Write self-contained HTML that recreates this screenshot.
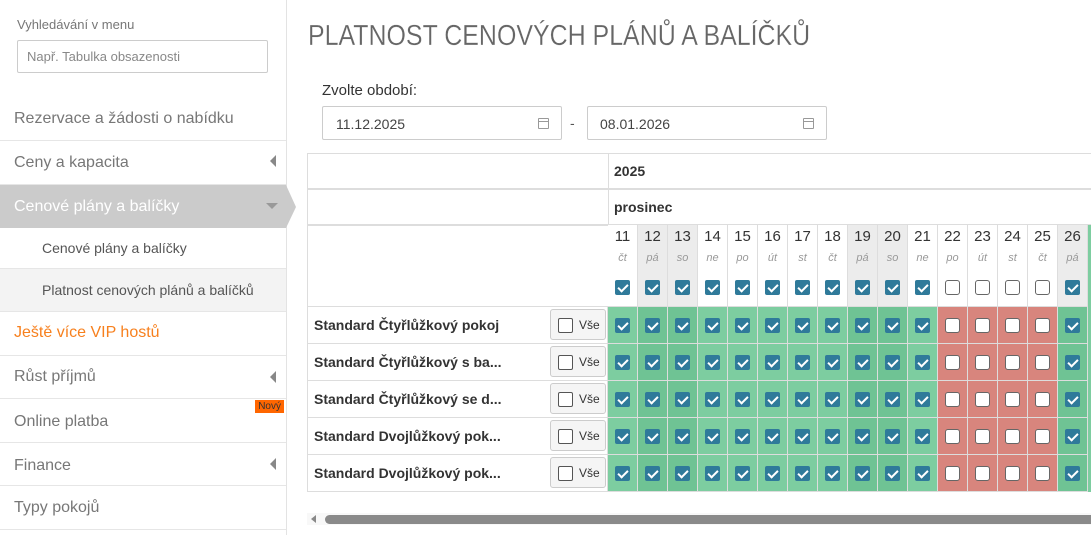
<!DOCTYPE html>
<html><head><meta charset="utf-8"><style>
*{box-sizing:border-box}
body{margin:0;width:1091px;height:535px;overflow:hidden;background:#fff;font-family:"Liberation Sans","DejaVu Sans",sans-serif;position:relative;color:#333}
.a{position:absolute}
.side{left:0;top:0;width:287px;height:535px;border-right:1px solid #e3e3e3}
.mi{position:absolute;left:0;width:286px;border-bottom:1px solid #e6e6e6;font-size:16px;color:#777;padding-left:14px}
.tri{position:absolute;right:10px;width:0;height:0;border-top:6px solid transparent;border-bottom:6px solid transparent;border-right:6px solid #888}
.inp{border:1px solid #ccc;border-radius:2px;font-size:14px;color:#444}
.cal{position:absolute;right:12px;top:11px;width:11px;height:11px;border:1px solid #999;border-radius:1px}
.cal:before{content:"";position:absolute;left:0;right:0;top:2px;border-top:1px solid #999}
.col{position:absolute;top:225px;width:30px}
.h{height:82px;border-right:1px solid #ddd;border-bottom:1px solid #ddd;text-align:center;position:relative;background:#fff}
.w .h{background:#ececec}
.h b{position:absolute;left:0;right:0;top:3px;font-weight:normal;font-size:15px;color:#333}
.h i{position:absolute;left:0;right:0;top:27px;font-size:11px;color:#999}
.h span{position:absolute;left:7px;top:55px}
.d{height:37px;border-right:1px solid #ddd;border-bottom:1px solid #ddd;position:relative;background:#7dcda0}
.w .d{background:#6fc394}
.r .d{background:#d8857d}
.d span{position:absolute;left:7px;top:11px}
.c,.u{display:block;width:15px;height:15px;border-radius:2px}
.c{background:#2f7a9a;position:relative}
.c:after{content:"";position:absolute;left:5px;top:2px;width:4px;height:8px;border:solid #fff;border-width:0 2px 2px 0;transform:rotate(45deg)}
.u{background:#fff;border:1px solid #666;border-radius:3px}
.rn{position:absolute;left:307px;width:301px;height:37px;border-left:1px solid #ddd;border-bottom:1px solid #ddd;border-right:1px solid #ddd;font-weight:bold;font-size:14px;color:#333;padding:10px 0 0 6px}
.vse{position:absolute;left:242px;top:2px;width:56px;height:31px;border:1px solid #ccc;border-radius:3px;background:#f5f5f5;font-weight:normal;font-size:12px;padding:8px 0 0 28px}
.vse:before{content:"";position:absolute;left:7px;top:8px;width:13px;height:13px;border:1px solid #555;border-radius:2px;background:#fff}
</style></head><body>
<div class="a side">
<div class="a" style="left:17px;top:17px;font-size:13px;color:#777">Vyhledávání v menu</div>
<div class="a inp" style="left:17px;top:40px;width:251px;height:33px;font-size:13px;color:#888;padding:8px 0 0 9px">Např. Tabulka obsazenosti</div>
<div class="mi" style="top:97px;height:44px;padding-top:13px">Rezervace a žádosti o nabídku</div>
<div class="mi" style="top:141px;height:44px;padding-top:13px">Ceny a kapacita<span class="tri" style="top:14px"></span></div>
<div class="mi" style="top:185px;height:43px;padding-top:13px;background:#cbcbcb;color:#fff;border:none">Cenové plány a balíčky<span class="a" style="right:8px;top:18px;border-left:6px solid transparent;border-right:6px solid transparent;border-top:6px solid #999"></span></div>
<div class="a" style="left:286px;top:185px;border-top:22px solid transparent;border-bottom:21px solid transparent;border-left:10px solid #cbcbcb"></div>
<div class="mi" style="top:228px;height:41px;padding:12px 0 0 42px;font-size:14px;color:#555">Cenové plány a balíčky</div>
<div class="mi" style="top:269px;height:43px;padding:13px 0 0 42px;font-size:14px;color:#555;background:#f3f3f3">Platnost cenových plánů a balíčků</div>
<div class="mi" style="top:312px;height:44px;padding-top:12px;color:#f7801e">Ještě více VIP hostů</div>
<div class="mi" style="top:356px;height:43px;padding-top:12px">Růst příjmů<span class="tri" style="top:15px"></span></div>
<div class="mi" style="top:399px;height:44px;padding-top:14px">Online platba<span class="a" style="right:2px;top:1px;background:#f60;color:#333;font-size:10px;padding:1px 3px">Nový</span></div>
<div class="mi" style="top:443px;height:43px;padding-top:14px">Finance<span class="tri" style="top:15px"></span></div>
<div class="mi" style="top:486px;height:44px;padding-top:13px">Typy pokojů</div>
</div>
<div class="a" style="left:308px;top:20px;font-size:29px;color:#666;transform:scaleX(0.86);transform-origin:0 0;white-space:nowrap;-webkit-text-stroke:0.2px #fff">PLATNOST CENOVÝCH PLÁNŮ A BALÍČKŮ</div>
<div class="a" style="left:322px;top:82px;font-size:15px;color:#333">Zvolte období:</div>
<div class="a inp" style="left:322px;top:106px;width:240px;height:34px;padding:9px 0 0 13px">11.12.2025<span class="cal"></span></div>
<div class="a" style="left:570px;top:115px;font-size:14px;color:#555">-</div>
<div class="a inp" style="left:587px;top:106px;width:240px;height:34px;padding:9px 0 0 12px">08.01.2026<span class="cal"></span></div>
<div class="a" style="left:307px;top:153px;width:784px;height:37px;border:1px solid #ddd;border-right:none;border-bottom:2px solid #ddd"></div>
<div class="a" style="left:307px;top:189px;width:784px;height:37px;border:1px solid #ddd;border-top:none;border-right:none;border-bottom:2px solid #ddd"></div>
<div class="a" style="left:307px;top:225px;width:302px;height:82px;border-left:1px solid #ddd;border-right:1px solid #ddd;border-bottom:1px solid #ddd"></div>
<div class="a" style="left:608px;top:153px;height:72px;border-left:1px solid #ddd"></div>
<div class="a" style="left:614px;top:163px;font-weight:bold;font-size:14px">2025</div>
<div class="a" style="left:614px;top:199px;font-weight:bold;font-size:14px">prosinec</div>
<div class="rn" style="top:307px">Standard Čtyřlůžkový pokoj<div class="vse">Vše</div></div>
<div class="rn" style="top:344px">Standard Čtyřlůžkový s ba...<div class="vse">Vše</div></div>
<div class="rn" style="top:381px">Standard Čtyřlůžkový se d...<div class="vse">Vše</div></div>
<div class="rn" style="top:418px">Standard Dvojlůžkový pok...<div class="vse">Vše</div></div>
<div class="rn" style="top:455px">Standard Dvojlůžkový pok...<div class="vse">Vše</div></div>

<div class="col" style="left:608px"><div class="h"><b>11</b><i>čt</i><span class="c"></span></div><div class="d"><span class="c"></span></div><div class="d"><span class="c"></span></div><div class="d"><span class="c"></span></div><div class="d"><span class="c"></span></div><div class="d"><span class="c"></span></div></div>
<div class="col w" style="left:638px"><div class="h"><b>12</b><i>pá</i><span class="c"></span></div><div class="d"><span class="c"></span></div><div class="d"><span class="c"></span></div><div class="d"><span class="c"></span></div><div class="d"><span class="c"></span></div><div class="d"><span class="c"></span></div></div>
<div class="col w" style="left:668px"><div class="h"><b>13</b><i>so</i><span class="c"></span></div><div class="d"><span class="c"></span></div><div class="d"><span class="c"></span></div><div class="d"><span class="c"></span></div><div class="d"><span class="c"></span></div><div class="d"><span class="c"></span></div></div>
<div class="col" style="left:698px"><div class="h"><b>14</b><i>ne</i><span class="c"></span></div><div class="d"><span class="c"></span></div><div class="d"><span class="c"></span></div><div class="d"><span class="c"></span></div><div class="d"><span class="c"></span></div><div class="d"><span class="c"></span></div></div>
<div class="col" style="left:728px"><div class="h"><b>15</b><i>po</i><span class="c"></span></div><div class="d"><span class="c"></span></div><div class="d"><span class="c"></span></div><div class="d"><span class="c"></span></div><div class="d"><span class="c"></span></div><div class="d"><span class="c"></span></div></div>
<div class="col" style="left:758px"><div class="h"><b>16</b><i>út</i><span class="c"></span></div><div class="d"><span class="c"></span></div><div class="d"><span class="c"></span></div><div class="d"><span class="c"></span></div><div class="d"><span class="c"></span></div><div class="d"><span class="c"></span></div></div>
<div class="col" style="left:788px"><div class="h"><b>17</b><i>st</i><span class="c"></span></div><div class="d"><span class="c"></span></div><div class="d"><span class="c"></span></div><div class="d"><span class="c"></span></div><div class="d"><span class="c"></span></div><div class="d"><span class="c"></span></div></div>
<div class="col" style="left:818px"><div class="h"><b>18</b><i>čt</i><span class="c"></span></div><div class="d"><span class="c"></span></div><div class="d"><span class="c"></span></div><div class="d"><span class="c"></span></div><div class="d"><span class="c"></span></div><div class="d"><span class="c"></span></div></div>
<div class="col w" style="left:848px"><div class="h"><b>19</b><i>pá</i><span class="c"></span></div><div class="d"><span class="c"></span></div><div class="d"><span class="c"></span></div><div class="d"><span class="c"></span></div><div class="d"><span class="c"></span></div><div class="d"><span class="c"></span></div></div>
<div class="col w" style="left:878px"><div class="h"><b>20</b><i>so</i><span class="c"></span></div><div class="d"><span class="c"></span></div><div class="d"><span class="c"></span></div><div class="d"><span class="c"></span></div><div class="d"><span class="c"></span></div><div class="d"><span class="c"></span></div></div>
<div class="col" style="left:908px"><div class="h"><b>21</b><i>ne</i><span class="c"></span></div><div class="d"><span class="c"></span></div><div class="d"><span class="c"></span></div><div class="d"><span class="c"></span></div><div class="d"><span class="c"></span></div><div class="d"><span class="c"></span></div></div>
<div class="col r" style="left:938px"><div class="h"><b>22</b><i>po</i><span class="u"></span></div><div class="d"><span class="u"></span></div><div class="d"><span class="u"></span></div><div class="d"><span class="u"></span></div><div class="d"><span class="u"></span></div><div class="d"><span class="u"></span></div></div>
<div class="col r" style="left:968px"><div class="h"><b>23</b><i>út</i><span class="u"></span></div><div class="d"><span class="u"></span></div><div class="d"><span class="u"></span></div><div class="d"><span class="u"></span></div><div class="d"><span class="u"></span></div><div class="d"><span class="u"></span></div></div>
<div class="col r" style="left:998px"><div class="h"><b>24</b><i>st</i><span class="u"></span></div><div class="d"><span class="u"></span></div><div class="d"><span class="u"></span></div><div class="d"><span class="u"></span></div><div class="d"><span class="u"></span></div><div class="d"><span class="u"></span></div></div>
<div class="col r" style="left:1028px"><div class="h"><b>25</b><i>čt</i><span class="u"></span></div><div class="d"><span class="u"></span></div><div class="d"><span class="u"></span></div><div class="d"><span class="u"></span></div><div class="d"><span class="u"></span></div><div class="d"><span class="u"></span></div></div>
<div class="col w" style="left:1058px"><div class="h"><b>26</b><i>pá</i><span class="c"></span></div><div class="d"><span class="c"></span></div><div class="d"><span class="c"></span></div><div class="d"><span class="c"></span></div><div class="d"><span class="c"></span></div><div class="d"><span class="c"></span></div></div>
<div class="a" style="left:1088px;top:225px;width:3px;height:267px;background:#7dcda0"></div>

<div class="a" style="left:307px;top:513px;width:784px;height:12px;background:#f8f8f8"></div>
<div class="a" style="left:311px;top:515px;border-top:4px solid transparent;border-bottom:4px solid transparent;border-right:5px solid #888"></div>
<div class="a" style="left:325px;top:515px;width:780px;height:9px;border-radius:5px;background:#8a8a8a"></div>
</body></html>
